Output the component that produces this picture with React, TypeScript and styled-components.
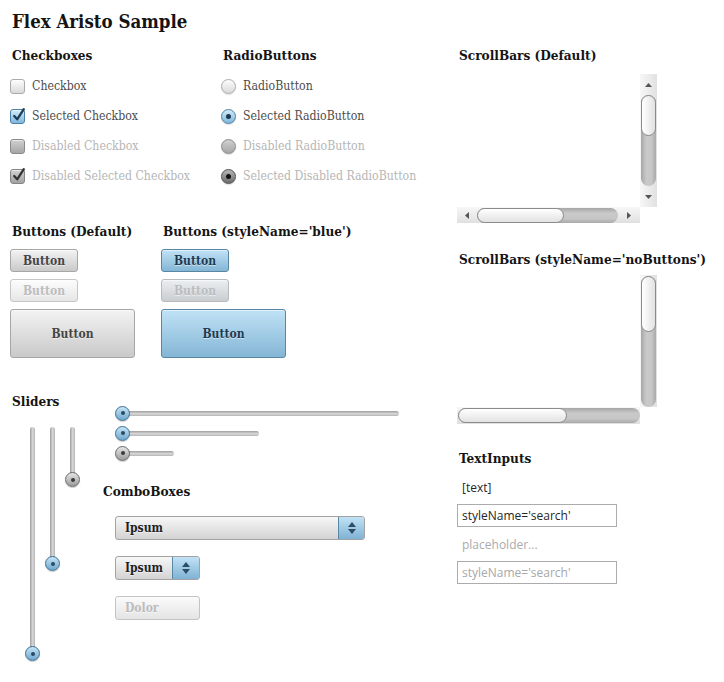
import React from "react";
import styled, { createGlobalStyle, css } from "styled-components";

const SERIF = `"DejaVu Serif Condensed", "DejaVu Serif", "Liberation Serif", serif`;
const SANS = `"Open Sans", "Noto Sans", sans-serif`;

const GlobalStyle = createGlobalStyle`
  html, body { margin: 0; padding: 0; background: #ffffff; }
  body { font-family: ${SERIF}; }
  * { box-sizing: border-box; }
`;

const Page = styled.div`
  width: 724px;
  height: 682px;
  padding: 10px 0 0 10px;
  font-family: ${SERIF};
  font-stretch: semi-condensed;
`;

const Title = styled.h1`
  margin: 0;
  padding-left: 2px;
  font-size: 18.5px;
  line-height: 24px;
  font-weight: bold;
  color: #141414;
  white-space: nowrap;
`;

const Main = styled.div`
  display: flex;
  margin-top: 11px;
`;

const LeftCol = styled.div`
  width: 447px;
  display: flex;
  flex-direction: column;
`;

const RightCol = styled.div`
  display: flex;
  flex-direction: column;
`;

const Heading = styled.h2<{ $mt?: number }>`
  margin: ${({ $mt }) => $mt ?? 0}px 0 0 0;
  padding-left: 2px;
  font-size: 13.5px;
  line-height: 20px;
  font-weight: bold;
  color: #141414;
  white-space: nowrap;
`;

const Row = styled.div<{ $mt?: number }>`
  display: flex;
  margin-top: ${({ $mt }) => $mt ?? 0}px;
`;

const Group = styled.div<{ $w?: number }>`
  display: flex;
  flex-direction: column;
  width: ${({ $w }) => ($w ? `${$w}px` : "auto")};
  flex: none;
`;

/* ---------- check boxes & radios ---------- */

const OptionList = styled.div`
  display: flex;
  flex-direction: column;
  margin-top: 6px;
`;

const OptionRow = styled.div<{ $disabled?: boolean }>`
  display: flex;
  align-items: center;
  gap: 7px;
  height: 30px;
  font-size: 12.2px;
  white-space: nowrap;
  color: ${({ $disabled }) => ($disabled ? "#b6b6b6" : "#4c4c4c")};
`;

const boxSkin = ({ $checked, $disabled }: { $checked?: boolean; $disabled?: boolean }) => {
  if ($disabled && $checked)
    return css`
      border-color: #858585;
      background: linear-gradient(#d2d2d2, #a2a2a2);
    `;
  if ($disabled)
    return css`
      border-color: #8a8a8a;
      background: linear-gradient(#d0d0d0, #a6a6a6);
    `;
  if ($checked)
    return css`
      border-color: #4a81a6;
      background: linear-gradient(#d3ebf8, #80b6da);
    `;
  return css`
    border-color: #ababab;
    background: linear-gradient(#fdfdfd, #d9d9d9);
  `;
};

const CheckBoxBox = styled.span<{ $checked?: boolean; $disabled?: boolean }>`
  position: relative;
  flex: none;
  width: 15px;
  height: 15px;
  border: 1px solid;
  border-radius: 3px;
  box-shadow: inset 0 1px 0 rgba(255, 255, 255, 0.55);
  ${boxSkin}
`;

const CheckMark = styled.svg<{ $disabled?: boolean }>`
  position: absolute;
  left: 0;
  top: -3px;
  width: 15px;
  height: 16px;
  overflow: visible;
  path {
    fill: none;
    stroke: ${({ $disabled }) => ($disabled ? "#333333" : "#1e3c57")};
    stroke-width: 2.3;
    stroke-linecap: round;
    stroke-linejoin: round;
  }
`;

const RadioCircle = styled.span<{ $checked?: boolean; $disabled?: boolean }>`
  flex: none;
  width: 15px;
  height: 15px;
  border-radius: 50%;
  border: 1px solid;
  display: flex;
  align-items: center;
  justify-content: center;
  box-shadow: 0 1px 1px rgba(0, 0, 0, 0.12);
  ${({ $checked, $disabled }) =>
    $disabled && $checked
      ? css`
          border-color: #4e4e4e;
          background: linear-gradient(#b6b6b6, #6c6c6c);
        `
      : boxSkin({ $checked, $disabled })}
`;

const RadioDot = styled.span<{ $disabled?: boolean }>`
  width: 5px;
  height: 5px;
  border-radius: 50%;
  background: ${({ $disabled }) => ($disabled ? "#111111" : "#1d3a52")};
`;

const CheckBox = ({ label, checked, disabled }: { label: string; checked?: boolean; disabled?: boolean }) => (
  <OptionRow $disabled={disabled}>
    <CheckBoxBox $checked={checked} $disabled={disabled}>
      {checked && (
        <CheckMark $disabled={disabled} viewBox="0 0 15 16">
          <path d="M3.2 9 L6.2 12.3 L12.8 2.2" />
        </CheckMark>
      )}
    </CheckBoxBox>
    {label}
  </OptionRow>
);

const Radio = ({ label, checked, disabled }: { label: string; checked?: boolean; disabled?: boolean }) => (
  <OptionRow $disabled={disabled}>
    <RadioCircle $checked={checked} $disabled={disabled}>
      {checked && <RadioDot $disabled={disabled} />}
    </RadioCircle>
    {label}
  </OptionRow>
);

/* ---------- buttons ---------- */

const ButtonStack = styled.div`
  display: flex;
  flex-direction: column;
  align-items: flex-start;
  gap: 7px;
  margin-top: 8px;
`;

const buttonSkin = ({ $blue, $disabled }: { $blue?: boolean; $disabled?: boolean }) => {
  if ($blue && $disabled)
    return css`
      border-color: #b6bbbf;
      background: linear-gradient(#eceff1, #c9cdd0);
      color: #b9bdc0;
    `;
  if ($blue)
    return css`
      border-color: #5887a6;
      background: linear-gradient(#c0e2f6, #84b6d5);
      color: #1d3a51;
    `;
  if ($disabled)
    return css`
      border-color: #c6c6c6;
      background: linear-gradient(#fdfdfd, #e6e6e6);
      color: #bdbdbd;
    `;
  return css`
    border-color: #a6a6a6;
    background: linear-gradient(#f3f3f3, #c9c9c9);
    color: #444444;
  `;
};

const Button = styled.button<{ $blue?: boolean; $disabled?: boolean; $big?: boolean }>`
  width: ${({ $big }) => ($big ? 125 : 68)}px;
  height: ${({ $big }) => ($big ? 49 : 23)}px;
  padding: 0;
  border: 1px solid;
  border-radius: 3px;
  font-family: ${SERIF};
  font-stretch: semi-condensed;
  font-size: 12px;
  font-weight: bold;
  text-shadow: 0 1px 0 rgba(255, 255, 255, 0.55);
  box-shadow: inset 0 1px 0 rgba(255, 255, 255, 0.5);
  cursor: default;
  ${buttonSkin}
`;

/* ---------- sliders ---------- */

const SliderSection = styled.div`
  display: flex;
  margin-top: 33px;
`;

const SliderLeft = styled.div`
  width: 91px;
  flex: none;
  display: flex;
  flex-direction: column;
`;

const SliderRight = styled.div`
  display: flex;
  flex-direction: column;
`;

const VSliders = styled.div`
  display: flex;
  align-items: flex-start;
  gap: 5px;
  padding-left: 15px;
  margin-top: 16px;
`;

const HSliders = styled.div`
  display: flex;
  flex-direction: column;
  margin-top: 12px;
  padding-left: 14px;
`;

const HSliderRow = styled.div`
  height: 20px;
  display: flex;
  align-items: center;
`;

const Thumb = styled.span<{ $disabled?: boolean; $vertical?: boolean }>`
  position: absolute;
  left: 0;
  ${({ $vertical }) => ($vertical ? "bottom: 0;" : "top: 0;")}
  width: 15px;
  height: 15px;
  border-radius: 50%;
  border: 1px solid ${({ $disabled }) => ($disabled ? "#6b6b6b" : "#3f6f92")};
  background: ${({ $disabled }) =>
    $disabled ? "linear-gradient(#e6e6e6, #9b9b9b)" : "linear-gradient(#c6e5f7, #6fa7cd)"};
  box-shadow: 0 1px 1px rgba(0, 0, 0, 0.2);
  display: flex;
  align-items: center;
  justify-content: center;
`;

const ThumbDot = styled.span<{ $disabled?: boolean }>`
  width: 4px;
  height: 4px;
  border-radius: 50%;
  background: ${({ $disabled }) => ($disabled ? "#3a3a3a" : "#2a4962")};
`;

const HSliderBox = styled.div<{ $len: number }>`
  position: relative;
  width: ${({ $len }) => $len}px;
  height: 15px;
  display: flex;
  align-items: center;
  padding-left: 7px;
`;

const HTrack = styled.div`
  flex: 1;
  height: 5px;
  border-radius: 3px;
  background: linear-gradient(#9d9d9d, #d9d9d9 55%, #b4b4b4);
`;

const VSliderBox = styled.div<{ $len: number }>`
  position: relative;
  width: 15px;
  height: ${({ $len }) => $len}px;
  display: flex;
  flex-direction: column;
  align-items: center;
  padding-bottom: 7px;
`;

const VTrack = styled.div`
  flex: 1;
  width: 5px;
  border-radius: 3px;
  background: linear-gradient(to right, #9d9d9d, #dadada 55%, #b2b2b2);
`;

const HSlider = ({ len, disabled }: { len: number; disabled?: boolean }) => (
  <HSliderBox $len={len}>
    <HTrack />
    <Thumb $disabled={disabled}>
      <ThumbDot $disabled={disabled} />
    </Thumb>
  </HSliderBox>
);

const VSlider = ({ len, disabled }: { len: number; disabled?: boolean }) => (
  <VSliderBox $len={len}>
    <VTrack />
    <Thumb $vertical $disabled={disabled}>
      <ThumbDot $disabled={disabled} />
    </Thumb>
  </VSliderBox>
);

/* ---------- combo boxes ---------- */

const ComboList = styled.div`
  display: flex;
  flex-direction: column;
  gap: 16px;
  margin-top: 15px;
  padding-left: 14px;
`;

const Combo = styled.div<{ $w: number; $disabled?: boolean }>`
  display: flex;
  width: ${({ $w }) => $w}px;
  height: 24px;
  border: 1px solid ${({ $disabled }) => ($disabled ? "#c4c4c4" : "#a3a3a3")};
  border-radius: 3px;
  overflow: hidden;
  background: ${({ $disabled }) =>
    $disabled ? "linear-gradient(#fbfbfb, #e4e4e4)" : "linear-gradient(#f7f7f7, #d3d3d3)"};
`;

const ComboLabel = styled.span<{ $disabled?: boolean }>`
  flex: 1;
  display: flex;
  align-items: center;
  padding-left: 9px;
  font-size: 12px;
  font-weight: bold;
  color: ${({ $disabled }) => ($disabled ? "#bcbcbc" : "#1f1f1f")};
  text-shadow: 0 1px 0 rgba(255, 255, 255, 0.5);
`;

const ComboArrow = styled.span<{ $w: number }>`
  flex: none;
  width: ${({ $w }) => $w}px;
  border-left: 1px solid #5a89a8;
  background: linear-gradient(#c1e2f6, #7fb2d3);
  display: flex;
  flex-direction: column;
  align-items: center;
  justify-content: center;
  gap: 2px;
  svg {
    display: block;
    fill: #2d4d67;
  }
`;

const ComboBox = ({ w, label, arrowW, disabled }: { w: number; label: string; arrowW?: number; disabled?: boolean }) => (
  <Combo $w={w} $disabled={disabled}>
    <ComboLabel $disabled={disabled}>{label}</ComboLabel>
    {arrowW && (
      <ComboArrow $w={arrowW}>
        <svg width="8" height="5" viewBox="0 0 8 5">
          <path d="M0 5 L4 0 L8 5 Z" />
        </svg>
        <svg width="8" height="5" viewBox="0 0 8 5">
          <path d="M0 0 L8 0 L4 5 Z" />
        </svg>
      </ComboArrow>
    )}
  </Combo>
);

/* ---------- scroll bars ---------- */

const ScrollArea = styled.div<{ $rows: string; $mt: number }>`
  display: grid;
  grid-template-columns: 183px 17px;
  grid-template-rows: ${({ $rows }) => $rows};
  margin-top: ${({ $mt }) => $mt}px;
`;

const Blank = styled.div``;

const VBar = styled.div<{ $pad?: number }>`
  grid-column: 2;
  grid-row: 1;
  display: flex;
  flex-direction: column;
  align-items: center;
  padding: ${({ $pad }) => $pad ?? 0}px 0 0 0;
  background: linear-gradient(to right, #f7f7f7, #e1e1e1);
`;

const HBar = styled.div<{ $pad?: number }>`
  grid-column: 1;
  grid-row: 2;
  display: flex;
  align-items: center;
  padding: 0 0 0 ${({ $pad }) => $pad ?? 0}px;
  background: linear-gradient(#f7f7f7, #e0e0e0);
`;

const ArrowCell = styled.div<{ $size: number; $vertical?: boolean }>`
  flex: none;
  ${({ $vertical, $size }) =>
    $vertical ? `height: ${$size}px; align-self: stretch;` : `width: ${$size}px; align-self: stretch;`}
  display: flex;
  align-items: center;
  justify-content: center;
  svg {
    display: block;
    fill: #555555;
  }
`;

const VGutter = styled.div`
  flex: 1;
  width: 15px;
  border-radius: 8px;
  background: linear-gradient(to right, #a6a6a6, #c9c9c9 35%, #c7c7c7 70%, #a9a9a9);
  display: flex;
  flex-direction: column;
`;

const HGutter = styled.div`
  flex: 1;
  height: 15px;
  border-radius: 8px;
  background: linear-gradient(#a6a6a6, #c9c9c9 35%, #c7c7c7 70%, #a9a9a9);
  display: flex;
`;

const VThumb = styled.div<{ $size: number }>`
  flex: none;
  height: ${({ $size }) => $size}px;
  border: 1px solid #8b8b8b;
  border-radius: 8px;
  background: linear-gradient(to right, #ffffff, #e2e2e2);
`;

const HThumb = styled.div<{ $size: number }>`
  flex: none;
  width: ${({ $size }) => $size}px;
  border: 1px solid #8b8b8b;
  border-radius: 8px;
  background: linear-gradient(#ffffff, #e2e2e2);
`;

const Tri = ({ dir }: { dir: "up" | "down" | "left" | "right" }) => {
  const d = {
    up: "M0 4 L3.5 0 L7 4 Z",
    down: "M0 0 L7 0 L3.5 4 Z",
    left: "M4 0 L4 7 L0 3.5 Z",
    right: "M0 0 L4 3.5 L0 7 Z",
  }[dir];
  const vert = dir === "up" || dir === "down";
  return (
    <svg width={vert ? 7 : 4} height={vert ? 4 : 7} viewBox={vert ? "0 0 7 4" : "0 0 4 7"}>
      <path d={d} />
    </svg>
  );
};

/* ---------- text inputs ---------- */

const FieldList = styled.div`
  display: flex;
  flex-direction: column;
  align-items: flex-start;
  gap: 6px;
  margin-top: 8px;
`;

const Field = styled.input<{ $boxed?: boolean; $muted?: boolean }>`
  width: 160px;
  height: ${({ $boxed }) => ($boxed ? 23 : 22)}px;
  margin: 0;
  padding: 0 0 0 ${({ $boxed }) => ($boxed ? 4 : 5)}px;
  border: ${({ $boxed }) => ($boxed ? "1px solid #acacac" : "none")};
  background: #ffffff;
  outline: none;
  font-family: ${SANS};
  font-size: 12px;
  color: ${({ $muted }) => ($muted ? "#a8a8a8" : "#262626")};
  &::placeholder {
    color: #ababab;
    opacity: 1;
  }
`;

export default function App() {
  return (
    <>
      <GlobalStyle />
      <Page>
        <Title>Flex Aristo Sample</Title>
        <Main>
          <LeftCol>
            <Row>
              <Group $w={211}>
                <Heading>Checkboxes</Heading>
                <OptionList>
                  <CheckBox label="Checkbox" />
                  <CheckBox label="Selected Checkbox" checked />
                  <CheckBox label="Disabled Checkbox" disabled />
                  <CheckBox label="Disabled Selected Checkbox" checked disabled />
                </OptionList>
              </Group>
              <Group>
                <Heading>RadioButtons</Heading>
                <OptionList>
                  <Radio label="RadioButton" />
                  <Radio label="Selected RadioButton" checked />
                  <Radio label="Disabled RadioButton" disabled />
                  <Radio label="Selected Disabled RadioButton" checked disabled />
                </OptionList>
              </Group>
            </Row>

            <Row $mt={30}>
              <Group $w={151}>
                <Heading>Buttons (Default)</Heading>
                <ButtonStack>
                  <Button>Button</Button>
                  <Button $disabled>Button</Button>
                  <Button $big>Button</Button>
                </ButtonStack>
              </Group>
              <Group>
                <Heading>Buttons (styleName='blue')</Heading>
                <ButtonStack>
                  <Button $blue>Button</Button>
                  <Button $blue $disabled>Button</Button>
                  <Button $blue $big>Button</Button>
                </ButtonStack>
              </Group>
            </Row>

            <SliderSection>
              <SliderLeft>
                <Heading>Sliders</Heading>
                <VSliders>
                  <VSlider len={234} />
                  <VSlider len={144} />
                  <VSlider len={60} disabled />
                </VSliders>
              </SliderLeft>
              <SliderRight>
                <HSliders>
                  <HSliderRow>
                    <HSlider len={284} />
                  </HSliderRow>
                  <HSliderRow>
                    <HSlider len={144} />
                  </HSliderRow>
                  <HSliderRow>
                    <HSlider len={59} disabled />
                  </HSliderRow>
                </HSliders>
                <Heading $mt={18}>ComboBoxes</Heading>
                <ComboList>
                  <ComboBox w={250} label="Ipsum" arrowW={26} />
                  <ComboBox w={85} label="Ipsum" arrowW={27} />
                  <ComboBox w={85} label="Dolor" disabled />
                </ComboList>
              </SliderRight>
            </SliderSection>
          </LeftCol>

          <RightCol>
            <Heading>ScrollBars (Default)</Heading>
            <ScrollArea $rows="133px 16px" $mt={9}>
              <Blank />
              <VBar>
                <ArrowCell $vertical $size={21}>
                  <Tri dir="up" />
                </ArrowCell>
                <VGutter>
                  <VThumb $size={41} />
                </VGutter>
                <ArrowCell $vertical $size={21}>
                  <Tri dir="down" />
                </ArrowCell>
              </VBar>
              <HBar>
                <ArrowCell $size={20}>
                  <Tri dir="left" />
                </ArrowCell>
                <HGutter>
                  <HThumb $size={87} />
                </HGutter>
                <ArrowCell $size={22}>
                  <Tri dir="right" />
                </ArrowCell>
              </HBar>
              <Blank />
            </ScrollArea>

            <Heading $mt={26}>ScrollBars (styleName='noButtons')</Heading>
            <ScrollArea $rows="132px 17px" $mt={6}>
              <Blank />
              <VBar $pad={1}>
                <VGutter>
                  <VThumb $size={56} />
                </VGutter>
              </VBar>
              <HBar $pad={1}>
                <HGutter>
                  <HThumb $size={109} />
                </HGutter>
              </HBar>
              <Blank />
            </ScrollArea>

            <Heading $mt={24}>TextInputs</Heading>
            <FieldList>
              <Field readOnly defaultValue="[text]" />
              <Field $boxed readOnly defaultValue="styleName='search'" />
              <Field readOnly placeholder="placeholder..." />
              <Field $boxed $muted readOnly defaultValue="styleName='search'" />
            </FieldList>
          </RightCol>
        </Main>
      </Page>
    </>
  );
}
